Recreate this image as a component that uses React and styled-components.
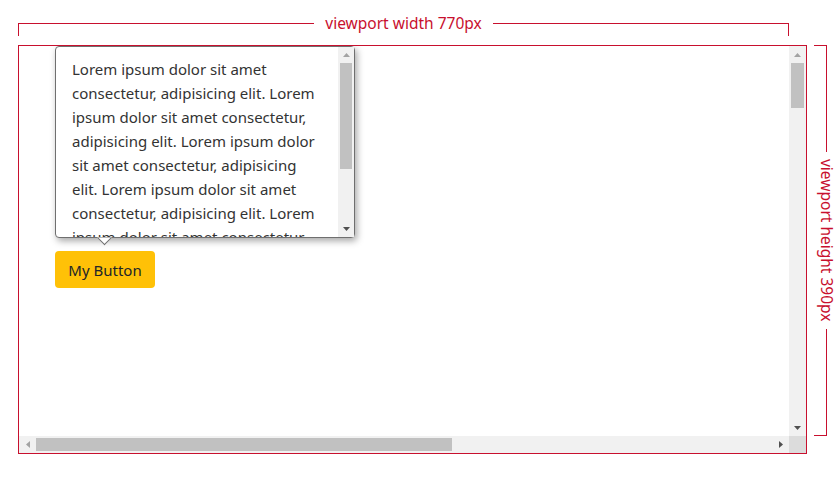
import React from "react";
import styled, { createGlobalStyle } from "styled-components";

const GlobalStyle = createGlobalStyle`
  body {
    margin: 0;
    background: #ffffff;
    font-family: "Noto Sans", "Open Sans", sans-serif;
  }
`;

const RED = "#c8102e";

const Page = styled.div`
  display: grid;
  grid-template-columns: 789px auto;
  grid-template-rows: auto auto;
  row-gap: 9px;
  column-gap: 7px;
  padding: 14px 0 0 18px;
`;

const WidthRuler = styled.div`
  display: flex;
  align-items: flex-start;
  width: 771px;
`;

const HSegment = styled.div`
  flex: 1;
  height: 13px;
  margin-top: 9px;
  box-sizing: border-box;
  border-top: 1px solid ${RED};
  border-left: ${(p) => (p.$side === "left" ? `1px solid ${RED}` : "none")};
  border-right: ${(p) => (p.$side === "right" ? `1px solid ${RED}` : "none")};
`;

const Label = styled.span`
  color: ${RED};
  font-size: 15.5px;
  line-height: 18px;
  padding: ${(p) => (p.$vertical ? "7px 0" : "0 11px")};
  margin-left: ${(p) => (p.$vertical ? "4px" : "0")};
  writing-mode: ${(p) => (p.$vertical ? "vertical-rl" : "horizontal-tb")};
  white-space: nowrap;
`;

const HeightRuler = styled.div`
  display: flex;
  flex-direction: column;
  align-items: flex-start;
  height: 391px;
`;

const VSegment = styled.div`
  flex: 1;
  width: 13px;
  box-sizing: border-box;
  border-right: 1px solid ${RED};
  border-top: ${(p) => (p.$side === "top" ? `1px solid ${RED}` : "none")};
  border-bottom: ${(p) => (p.$side === "bottom" ? `1px solid ${RED}` : "none")};
`;

const Frame = styled.div`
  box-sizing: border-box;
  width: 789px;
  border: 1px solid ${RED};
  display: grid;
  grid-template-columns: 770px 17px;
  grid-template-rows: 390px 17px;
`;

const Viewport = styled.div`
  background: #ffffff;
  overflow: hidden;
  padding-left: 36px;
`;

const Anchor = styled.div`
  display: flex;
  flex-direction: column;
  align-items: flex-start;
  gap: 13px;
`;

const Popover = styled.div`
  position: relative;
  box-sizing: border-box;
  width: 300px;
  height: 192px;
  border: 1px solid #6f6f6f;
  border-radius: 4px;
  background: #ffffff;
  box-shadow: 2px 3px 7px rgba(0, 0, 0, 0.35);
  display: flex;
`;

const PopoverBody = styled.div`
  flex: 1;
  overflow: hidden;
  padding: 10px 16px 0 16px;
  font-size: 15px;
  line-height: 24px;
  color: #333333;
  border-radius: 4px 0 0 4px;
`;

const Caret = styled.div`
  position: absolute;
  left: 43px;
  bottom: -6px;
  width: 10px;
  height: 10px;
  background: #ffffff;
  border-right: 1px solid #6f6f6f;
  border-bottom: 1px solid #6f6f6f;
  transform: rotate(45deg);
  clip-path: polygon(110% -10%, 110% 110%, -10% 110%);
`;

const Button = styled.button`
  height: 37px;
  width: 100px;
  border: none;
  border-radius: 4px;
  background: #ffc107;
  color: #212529;
  font-family: inherit;
  font-size: 15px;
  padding: 0;
  cursor: pointer;
`;

const Track = styled.div`
  display: flex;
  flex-direction: ${(p) => (p.$horizontal ? "row" : "column")};
  background: #f1f1f1;
  ${(p) => (p.$horizontal ? `height: ${p.$size}px;` : `width: ${p.$size}px;`)}
`;

const ArrowButton = styled.div`
  flex: 0 0 ${(p) => p.$size}px;
  display: flex;
  align-items: center;
  justify-content: center;
`;

const Rail = styled.div`
  flex: 1;
  display: flex;
  flex-direction: ${(p) => (p.$horizontal ? "row" : "column")};
  padding: ${(p) => (p.$horizontal ? "2px 0" : "0 2px")};
`;

const Thumb = styled.div`
  background: #c1c1c1;
  flex: 0 0 ${(p) => p.$length}px;
`;

const Corner = styled.div`
  background: #dcdcdc;
`;

const arrowPoints = {
  up: "0,4 3.5,0 7,4",
  down: "0,0 3.5,4 7,0",
  left: "4,0 0,3.5 4,7",
  right: "0,0 4,3.5 0,7",
};

const Arrow = ({ dir, active }) => {
  const vertical = dir === "up" || dir === "down";
  return (
    <svg width={vertical ? 7 : 4} height={vertical ? 4 : 7} viewBox={vertical ? "0 0 7 4" : "0 0 4 7"}>
      <polygon points={arrowPoints[dir]} fill={active ? "#505050" : "#a3a3a3"} />
    </svg>
  );
};

const Scrollbar = ({ horizontal, size, thumb }) => (
  <Track $horizontal={horizontal} $size={size}>
    <ArrowButton $size={size}>
      <Arrow dir={horizontal ? "left" : "up"} />
    </ArrowButton>
    <Rail $horizontal={horizontal}>
      <Thumb $length={thumb} />
    </Rail>
    <ArrowButton $size={size}>
      <Arrow dir={horizontal ? "right" : "down"} active />
    </ArrowButton>
  </Track>
);

const lorem = "Lorem ipsum dolor sit amet consectetur, adipisicing elit. ";

export default function App() {
  return (
    <>
      <GlobalStyle />
      <Page>
        <WidthRuler>
          <HSegment $side="left" />
          <Label>viewport width 770px</Label>
          <HSegment $side="right" />
        </WidthRuler>
        <div />
        <Frame>
          <Viewport>
            <Anchor>
              <Popover>
                <PopoverBody>{lorem.repeat(6)}</PopoverBody>
                <Scrollbar size={16} thumb={106} />
                <Caret />
              </Popover>
              <Button>My Button</Button>
            </Anchor>
          </Viewport>
          <Scrollbar size={17} thumb={45} />
          <Scrollbar horizontal size={17} thumb={416} />
          <Corner />
        </Frame>
        <HeightRuler>
          <VSegment $side="top" />
          <Label $vertical>viewport height 390px</Label>
          <VSegment $side="bottom" />
        </HeightRuler>
      </Page>
    </>
  );
}
